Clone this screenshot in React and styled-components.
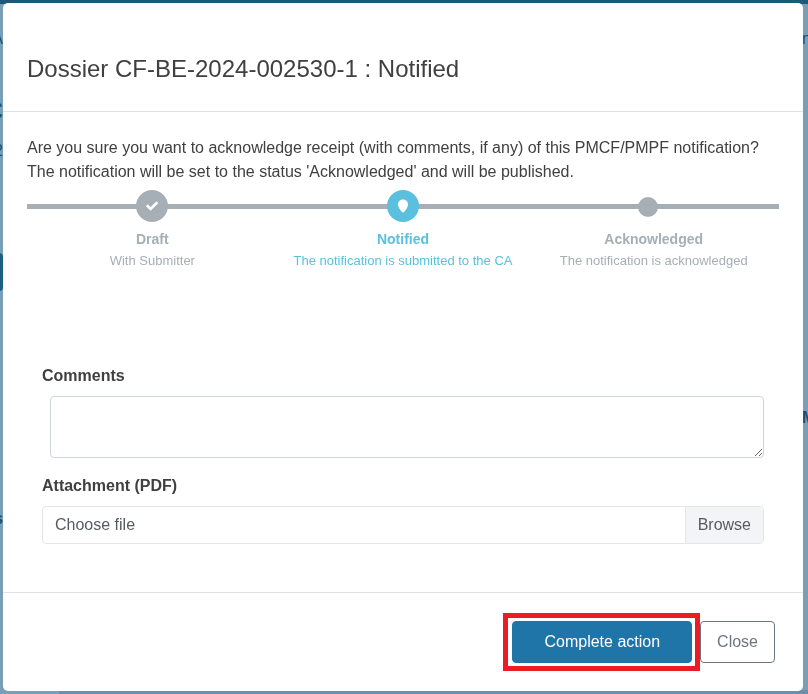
import React, { useState } from 'react'
import styled, { createGlobalStyle } from 'styled-components'

const GlobalStyle = createGlobalStyle`
    *, *::before, *::after {
        box-sizing: border-box;
    }
    body {
        margin: 0;
        font-family: "Liberation Sans", Arial, sans-serif;
        font-size: 16px;
        line-height: 24px;
        color: #404040;
        background: #789fb8;
    }
`
const Page = styled.div`
    position: fixed;
    inset: 0;
    overflow: hidden;
    display: flex;
    flex-direction: column;
    background: #789fb8;
    color: #1f4d6b;
`
const TopBar = styled.div`
    height: 4px;
    background: #1c5a7a;
`
const PageBody = styled.div`
    flex: 1;
    min-height: 0;
    display: flex;
    justify-content: space-between;
    overflow: hidden;
`
const PageEdge = styled.div`
    width: ${props => props.$width};
    display: flex;
    flex-direction: column;
    align-items: ${props => props.$right ? 'flex-start' : 'flex-end'};
    overflow: hidden;
`
const Fragment = styled.span`
    margin-top: ${props => props.$gap};
    font-size: ${props => props.$size || '16px'};
    font-weight: ${props => props.$bold ? 700 : 400};
    line-height: 24px;
`
const Pill = styled.div`
    width: 40px;
    height: 38px;
    margin-top: 90px;
    border-radius: 4px;
    background: #1c6080;
`
const PageFooter = styled.div`
    height: 4px;
    margin-left: 59px;
    background: #6b8fa8;
`
const Overlay = styled.div`
    position: relative;
    padding: 3px 5px 3px 3px;
`
const Modal = styled.div`
    background: #fff;
    border-radius: 5px;
`
const ModalHeader = styled.header`
    padding: 48px 24px 24px;
    border-bottom: 1px solid #dee2e6;
`
const Title = styled.h1`
    margin: 0;
    font-size: 24px;
    font-weight: 400;
    line-height: 36px;
`
const ModalBody = styled.div`
    padding: 24px 24px 48px;
`
const Message = styled.p`
    margin: 0;
`
const Steps = styled.ol`
    display: grid;
    grid-template-columns: repeat(3, 1fr);
    margin: 0;
    padding: 6px 0 0;
    list-style: none;
    background: linear-gradient(#a6afb5, #a6afb5) 0 20px / 100% 5px no-repeat;
`
const StepItem = styled.li`
    display: flex;
    flex-direction: column;
    align-items: center;
    color: ${props => props.$active ? '#5bc0de' : '#a6afb5'};
`
const Marker = styled.span`
    display: flex;
    align-items: center;
    justify-content: center;
    width: 32px;
    height: 32px;
    border-radius: 50%;
    background: currentColor;
`
const PendingMarker = styled.span`
    width: 32px;
    height: 32px;
    padding-top: 7px;

    &::before {
        content: '';
        display: block;
        width: 20px;
        height: 20px;
        border-radius: 50%;
        background: currentColor;
    }
`
const StepName = styled.strong`
    margin-top: 7px;
    font-size: 14px;
    line-height: 20px;
`
const StepText = styled.span`
    font-size: 13px;
    line-height: 24px;
`
const Form = styled.form`
    padding: 91px 15px 0;
`
const Label = styled.label`
    display: block;
    font-weight: 700;
`
const Comments = styled.textarea`
    display: block;
    width: calc(100% - 8px);
    height: 62px;
    margin: 8px 0 16px 8px;
    padding: 6px 12px;
    border: 1px solid #ced4da;
    border-radius: 4px;
    font: inherit;
    color: #495057;
    resize: vertical;
`
const FilePicker = styled.div`
    position: relative;
    display: flex;
    height: 38px;
    margin-top: 8px;
    border: 1px solid #e4e7ea;
    border-radius: 4px;
    line-height: 36px;
    color: #555b61;
    overflow: hidden;
`
const FileName = styled.span`
    flex: 1;
    padding: 0 12px;
`
const Browse = styled.span`
    padding: 0 12px;
    border-left: 1px solid #e4e7ea;
    background: #f3f4f6;
`
const FileInput = styled.input`
    position: absolute;
    inset: 0;
    width: 100%;
    opacity: 0;
    cursor: pointer;
`
const ModalFooter = styled.footer`
    display: flex;
    align-items: center;
    justify-content: flex-end;
    padding: 20px 28px;
    border-top: 1px solid #dee2e6;
`
const Highlight = styled.div`
    padding: 3px 3px 3px 4px;
    border: 5px solid #ed1c24;
`
const Button = styled.button`
    height: 42px;
    padding: 0 ${props => props.$primary ? '31px' : '16px'};
    border: 1px solid ${props => props.$primary ? '#2075a8' : '#6c757d'};
    border-radius: 4px;
    background: ${props => props.$primary ? '#2075a8' : '#fff'};
    color: ${props => props.$primary ? '#fff' : '#6c757d'};
    font: inherit;
    cursor: pointer;
`

const steps = [
    { name: 'Draft', text: 'With Submitter', state: 'done' },
    { name: 'Notified', text: 'The notification is submitted to the CA', state: 'active' },
    { name: 'Acknowledged', text: 'The notification is acknowledged', state: 'pending' },
]

const CheckIcon = () => (
    <svg width="14" height="12" viewBox="0 0 14 12" fill="none" aria-hidden="true">
        <path d="M1.800 5.200 5.600 8.900 12.400 2.200" stroke="#fff" strokeWidth="2.700" />
    </svg>
)

const PinIcon = () => (
    <svg width="10" height="14" viewBox="0 0 10 14" aria-hidden="true">
        <path d="M5 0.500C7.800 0.500 10 2.600 10 5.300C10 8 8.200 10.500 5.800 13.200Q5 14 4.200 13.200C1.800 10.500 0 8 0 5.300C0 2.600 2.200 0.500 5 0.500z" fill="#fff" />
    </svg>
)

const Step = ({ name, text, state }) => (
    <StepItem $active={state === 'active'} aria-current={state === 'active' ? 'step' : undefined}>
        {state === 'pending'
            ? <PendingMarker />
            : <Marker>{state === 'done' ? <CheckIcon /> : <PinIcon />}</Marker>}
        <StepName>{name}</StepName>
        <StepText>{text}</StepText>
    </StepItem>
)

const App = () => {
    const [comments, setComments] = useState('')
    const [fileName, setFileName] = useState('')

    const pickFile = (e) => {
        const file = e.target.files[0]
        setFileName(file ? file.name : '')
    }

    return (
        <>
            <GlobalStyle />
            {/* page under the dialog, only its edges stay visible */}
            <Page aria-hidden="true">
                <TopBar />
                <PageBody>
                    <PageEdge $width="3px">
                        <Fragment $gap="23px">A</Fragment>
                        <Fragment $gap="48px" $size="28px" $bold>C</Fragment>
                        <Fragment $gap="16px">2</Fragment>
                        <Pill />
                        <Fragment $gap="216px" $bold>s</Fragment>
                    </PageEdge>
                    <PageEdge $width="6px" $right>
                        <Fragment $gap="23px">n</Fragment>
                        <Fragment $gap="355px" $bold>M</Fragment>
                    </PageEdge>
                </PageBody>
                <PageFooter />
            </Page>
            <Overlay>
                <Modal role="dialog" aria-labelledby="dialog-title">
                    <ModalHeader>
                        <Title id="dialog-title">Dossier CF-BE-2024-002530-1 : Notified</Title>
                    </ModalHeader>
                    <ModalBody>
                        <Message>
                            Are you sure you want to acknowledge receipt (with comments, if any) of this PMCF/PMPF notification?
                            <br />
                            The notification will be set to the status 'Acknowledged' and will be published.
                        </Message>
                        <Steps>
                            {steps.map((step) => <Step key={step.name} {...step} />)}
                        </Steps>
                        <Form id="action-form" onSubmit={(e) => e.preventDefault()}>
                            <Label htmlFor="comments">Comments</Label>
                            <Comments id="comments" value={comments} onChange={(e) => setComments(e.target.value)} />
                            <Label htmlFor="attachment">Attachment (PDF)</Label>
                            <FilePicker>
                                <FileName>{fileName || 'Choose file'}</FileName>
                                <Browse>Browse</Browse>
                                <FileInput id="attachment" type="file" accept="application/pdf" onChange={pickFile} />
                            </FilePicker>
                        </Form>
                    </ModalBody>
                    <ModalFooter>
                        <Highlight>
                            <Button $primary type="submit" form="action-form">Complete action</Button>
                        </Highlight>
                        <Button type="button">Close</Button>
                    </ModalFooter>
                </Modal>
            </Overlay>
        </>
    )
}

export default App
